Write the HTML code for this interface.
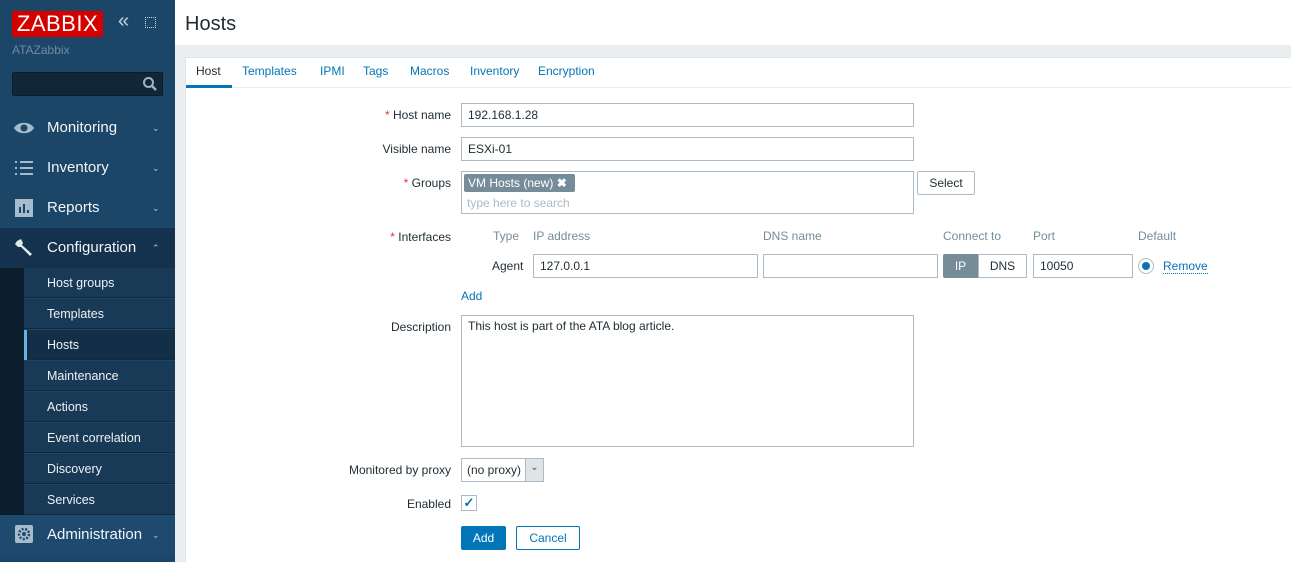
<!DOCTYPE html>
<html><head><meta charset="utf-8"><style>
*{box-sizing:border-box;margin:0;padding:0}
body{width:1291px;height:562px;overflow:hidden;position:relative;font-family:"Liberation Sans",Arial,sans-serif;font-size:12px;color:#1f2c33;background:#fff}
.a{position:absolute}
#side{left:0;top:0;width:175px;height:562px;background:#1b4668}
.logo{left:12px;top:11px;width:92px;height:26px;background:#d40000;color:#fff;font-size:22px;line-height:26px;text-align:center;letter-spacing:0.5px}
.mi{left:0;width:175px;height:40px;color:#f2f5f7;font-size:15px;line-height:40px}
.mi span.t{position:absolute;left:47px}
.mi .ch{position:absolute;left:152px;font-size:9px;color:#b8c6d1}
.sub{left:24px;width:151px;height:30px;color:#eef2f4;font-size:12.5px;line-height:30px;padding-left:23px;background:#183a57;border-bottom:1px solid #12293d}
.inp{border:1px solid #acbbc7;background:#fff;height:24px;font-size:12px;line-height:22px;padding-left:6px;color:#1f2c33}
.lbl{right:840px;font-size:12px;text-align:right;color:#1f2c33}
.req{color:#e33734}
.tab{top:64px;font-size:12px;color:#0275b8}
.hd{top:229px;color:#768d99;font-size:12px}
</style></head><body>
<div id="side" class="a">
<div class="a logo" style="width:91px">ZABBIX</div>
<div class="a" style="left:118px;top:10px;color:#c8d4dd;font-size:20px">«</div>
<div class="a" style="left:145px;top:17px;width:11px;height:11px;border:1px dotted #c8d4dd"></div>
<div class="a" style="left:12px;top:43px;color:#6f8ba3;font-size:12px">ATAZabbix</div>
<div class="a" style="left:12px;top:72px;width:151px;height:24px;background:#10273a;border:1px solid #0c1c29;border-radius:2px"></div>
<svg class="a" style="left:142px;top:76px" width="16" height="16"><circle cx="6.5" cy="6.5" r="4.5" fill="none" stroke="#9fb3c2" stroke-width="2"/><path d="M10 10l4 4" stroke="#9fb3c2" stroke-width="2.5"/></svg>
<div class="a mi" style="top:108px"><svg class="a" style="left:13px;top:13px" width="22" height="14"><path d="M1 7C5 0 17 0 21 7C17 14 5 14 1 7Z" fill="#a5bccd"/><circle cx="11" cy="7" r="3.5" fill="#1b4668"/></svg><span class="t">Monitoring</span><span class="ch">⌄</span></div>
<div class="a mi" style="top:148px"><svg class="a" style="left:15px;top:13px" width="18" height="14"><path d="M0 1h2M5 1h13M0 7h2M5 7h13M0 13h2M5 13h13" stroke="#a5bccd" stroke-width="2"/></svg><span class="t">Inventory</span><span class="ch">⌄</span></div>
<div class="a mi" style="top:188px"><svg class="a" style="left:15px;top:11px" width="18" height="18"><rect width="18" height="18" fill="#a5bccd"/><path d="M5 14V8M9 14V5M13 14V11" stroke="#1b4668" stroke-width="2"/></svg><span class="t">Reports</span><span class="ch">⌄</span></div>
<div class="a mi" style="top:228px;background:#14324d"><svg class="a" style="left:14px;top:10px" width="20" height="20"><path d="M3 3 L7 1 L9 5 L8 7 L18 16 L16 18 L7 9 L4 9 L1 6 Z" fill="#dfe6ec"/></svg><span class="t">Configuration</span><span class="ch">⌃</span></div>
<div class="a" style="left:0;top:268px;width:24px;height:247px;background:#0c1e2c"></div>
<div class="a sub" style="top:268px">Host groups</div>
<div class="a sub" style="top:299px">Templates</div>
<div class="a sub" style="top:330px;background:#132f48"><span class="a" style="left:0;top:0;width:3px;height:30px;background:#6cb0e0"></span>Hosts</div>
<div class="a sub" style="top:361px">Maintenance</div>
<div class="a sub" style="top:392px">Actions</div>
<div class="a sub" style="top:423px">Event correlation</div>
<div class="a sub" style="top:454px">Discovery</div>
<div class="a sub" style="top:485px">Services</div>
<div class="a mi" style="top:515px;background:#1d4a6e"><svg class="a" style="left:15px;top:10px" width="18" height="18"><rect width="18" height="18" rx="2" fill="#a5bccd"/><circle cx="9" cy="9" r="5" fill="none" stroke="#1d4a6e" stroke-width="2.5" stroke-dasharray="2 1.5"/><circle cx="9" cy="9" r="2" fill="#1d4a6e"/></svg><span class="t">Administration</span><span class="ch">⌄</span></div>
</div>
<div class="a" style="left:175px;top:45px;width:1116px;height:517px;background:#ebeef0"></div>
<div class="a" style="left:185px;top:57px;width:1106px;height:505px;background:#fff;border-left:1px solid #dfe4e7;border-top:1px solid #dfe4e7"></div>
<div class="a" style="left:185px;top:13px;font-size:20px;color:#1f2c33">Hosts</div>
<div class="a" style="left:185px;top:87px;width:1106px;height:1px;background:#ebeef0"></div>
<div class="a tab" style="left:196px;color:#1f2c33">Host</div>
<div class="a" style="left:186px;top:85px;width:46px;height:3px;background:#0275b8"></div>
<div class="a tab" style="left:242px">Templates</div>
<div class="a tab" style="left:320px">IPMI</div>
<div class="a tab" style="left:363px">Tags</div>
<div class="a tab" style="left:410px">Macros</div>
<div class="a tab" style="left:470px">Inventory</div>
<div class="a tab" style="left:538px">Encryption</div>

<div class="a lbl" style="top:108px"><span class="req">* </span>Host name</div>
<div class="a inp" style="left:461px;top:103px;width:453px">192.168.1.28</div>
<div class="a lbl" style="top:142px">Visible name</div>
<div class="a inp" style="left:461px;top:137px;width:453px">ESXi-01</div>
<div class="a lbl" style="top:176px"><span class="req">* </span>Groups</div>
<div class="a" style="left:461px;top:171px;width:453px;height:43px;border:1px solid #acbbc7"></div>
<div class="a" style="left:464px;top:174px;width:111px;height:18px;background:#768d99;color:#fff;font-size:12px;line-height:18px;padding-left:4px;border-radius:2px">VM Hosts (new) <b>✖</b></div>
<div class="a" style="left:467px;top:196px;color:#acbbc7">type here to search</div>
<div class="a" style="left:917px;top:171px;width:58px;height:24px;border:1px solid #acbbc7;border-radius:2px;text-align:center;line-height:22px">Select</div>

<div class="a lbl" style="top:230px"><span class="req">* </span>Interfaces</div>
<div class="a hd" style="left:493px">Type</div>
<div class="a hd" style="left:533px">IP address</div>
<div class="a hd" style="left:763px">DNS name</div>
<div class="a hd" style="left:943px">Connect to</div>
<div class="a hd" style="left:1033px">Port</div>
<div class="a hd" style="left:1138px">Default</div>
<div class="a" style="left:492px;top:259px">Agent</div>
<div class="a inp" style="left:533px;top:254px;width:225px">127.0.0.1</div>
<div class="a inp" style="left:763px;top:254px;width:175px"></div>
<div class="a" style="left:943px;top:254px;width:35px;height:24px;background:#768d99;color:#fff;text-align:center;line-height:24px;border-radius:2px 0 0 2px">IP</div>
<div class="a" style="left:978px;top:254px;width:49px;height:24px;border:1px solid #acbbc7;text-align:center;line-height:22px">DNS</div>
<div class="a inp" style="left:1033px;top:254px;width:100px">10050</div>
<div class="a" style="left:1138px;top:258px;width:16px;height:16px;border:1px solid #acbbc7;border-radius:50%"><div class="a" style="left:3px;top:3px;width:8px;height:8px;background:#0275b8;border-radius:50%"></div></div>
<div class="a" style="left:1163px;top:259px;color:#0275b8;border-bottom:1px dotted #0275b8">Remove</div>
<div class="a" style="left:461px;top:289px;color:#0275b8">Add</div>

<div class="a lbl" style="top:320px">Description</div>
<div class="a inp" style="left:461px;top:315px;width:453px;height:132px;line-height:20px">This host is part of the ATA blog article.</div>
<div class="a lbl" style="top:463px">Monitored by proxy</div>
<div class="a inp" style="left:461px;top:458px;width:83px;padding-left:5px">(no proxy)</div>
<div class="a" style="left:525px;top:459px;width:18px;height:22px;background:#dfe4e7;border-left:1px solid #acbbc7;text-align:center;font-size:10px;line-height:18px;color:#555">⌄</div>
<div class="a lbl" style="top:497px">Enabled</div>
<div class="a" style="left:461px;top:495px;width:16px;height:16px;border:1px solid #acbbc7;color:#0275b8;font-size:13px;line-height:14px;text-align:center;font-weight:bold">✓</div>
<div class="a" style="left:461px;top:526px;width:45px;height:24px;background:#0275b8;color:#fff;text-align:center;line-height:24px;border-radius:2px">Add</div>
<div class="a" style="left:516px;top:526px;width:64px;height:24px;border:1px solid #0275b8;color:#0275b8;text-align:center;line-height:22px;border-radius:2px">Cancel</div>
</body></html>
